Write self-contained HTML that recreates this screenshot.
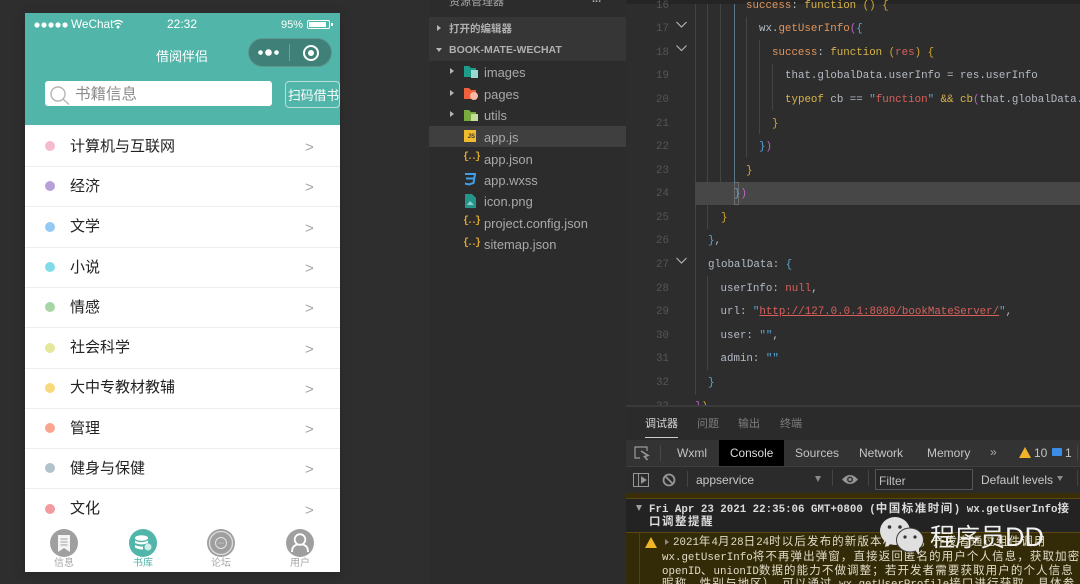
<!DOCTYPE html>
<html><head><meta charset="utf-8">
<style>
html,body{margin:0;padding:0;background:#2e2e2e}
#r{position:relative;width:1080px;height:584px;overflow:hidden;background:#2e2e2e;font-family:"Liberation Sans","Noto Sans CJK SC",sans-serif}
.a{position:absolute}
.t{position:absolute;white-space:nowrap}
.row{position:absolute;left:25px;width:315px;height:40px;border-bottom:1px solid #eee;box-sizing:content-box}
.row i{position:absolute;left:20px;top:15px;width:10px;height:10px;border-radius:50%}
.row b{position:absolute;left:45px;top:9.500px;font-weight:400;font-size:15px;line-height:22px;color:#222;white-space:nowrap}
.row u{position:absolute;left:280px;top:12px;text-decoration:none;font-size:15px;line-height:20px;color:#a6a6a6}
.f{position:absolute;left:484px;font-size:12.900px;line-height:18px;color:#a9a9a9;white-space:nowrap}
.ar{position:absolute;width:0;height:0;border-left:4px solid #b5b5b5;border-top:3.500px solid transparent;border-bottom:3.500px solid transparent}
.j{position:absolute;left:463px;font-size:10px;font-weight:700;color:#e0a92e;line-height:16px;letter-spacing:-2px;font-family:"Liberation Mono",monospace}
.n{position:absolute;left:640px;width:29px;text-align:right;font:10.800px/16px "Liberation Mono",monospace;color:#555}
.c{position:absolute;font:10.800px/16px "Liberation Mono",monospace;color:#b4bcc6;white-space:pre}
.g{position:absolute;width:1px;background:#444}
.y{color:#d4a72c}.r{color:#d8605c}.b{color:#56a6d8}.o{color:#d39a50}.p{color:#b866c8}.e{color:#e0955c}.l{color:#d9b44a}
.tab{position:absolute;top:557px;font-size:10px;line-height:14px;color:#a8a8a8;white-space:nowrap}
.dv{position:absolute;font-size:12px;line-height:16px;color:#c4c4c4;white-space:nowrap}
.m{position:absolute;left:662px;font:700 10.800px/15px "Liberation Mono","Noto Sans CJK SC",monospace;color:#dcdcdc;white-space:nowrap}
.m s{text-decoration:none;font-size:11.500px;letter-spacing:1.500px}
.m.w{font-weight:400;color:#e0dcc8}
.m.w s{letter-spacing:1.100px}
</style></head><body><div id="r">

<!-- phone -->
<div class="a" style="left:25px;top:13px;width:315px;height:559px;background:#fff;box-shadow:0 2px 8px #262626"></div>
<div class="a" style="left:25px;top:13px;width:315px;height:112px;background:#52b5a9"></div>
<svg class="a" style="left:34px;top:20px" width="36" height="10"><g fill="#fff"><circle cx="3" cy="5" r="2.600"/><circle cx="10" cy="5" r="2.600"/><circle cx="17" cy="5" r="2.600"/><circle cx="24" cy="5" r="2.600"/><circle cx="31" cy="5" r="2.600"/></g></svg>
<div class="t" style="left:71px;top:16px;font-size:11.800px;line-height:16px;color:#fff">WeChat</div>
<svg class="a" style="left:112px;top:19px" width="12" height="10" fill="none" stroke="#fff" stroke-width="1.100"><path d="M1 3.500Q6 -.5 11 3.500M3 5.500Q6 3 9 5.500"/><circle cx="6" cy="8" r=".9" fill="#fff"/></svg>
<div class="t" style="left:167px;top:16px;font-size:12px;line-height:16px;color:#fff">22:32</div>
<div class="t" style="left:281px;top:17px;font-size:11px;line-height:16px;color:#fff">95%</div>
<div class="a" style="left:307px;top:20px;width:21px;height:7px;border:1px solid #fff;border-radius:2px;box-sizing:content-box"></div>
<div class="a" style="left:309px;top:22px;width:17px;height:5px;background:#fff;box-sizing:content-box"></div>
<div class="a" style="left:331px;top:23px;width:1.500px;height:3px;background:#fff"></div>
<div class="t" style="left:156px;top:47px;font-size:13px;line-height:19px;color:#fff">借阅伴侣</div>
<div class="a" style="left:248px;top:38px;width:84px;height:29px;border-radius:15px;background:#3f8178;border:.5px solid #5d978f;box-sizing:border-box"></div>
<svg class="a" style="left:256px;top:44px" width="70" height="20"><g fill="#fff"><circle cx="4.500" cy="8.500" r="2.300"/><circle cx="12.500" cy="8.500" r="3.300"/><circle cx="20.500" cy="8.500" r="2.300"/></g><path d="M33.500 0V17" stroke="#6fa199"/><circle cx="55" cy="9" r="7" fill="none" stroke="#fff" stroke-width="2"/><circle cx="55" cy="9" r="3" fill="#fff"/></svg>
<div class="a" style="left:45px;top:81px;width:227px;height:25px;background:#fff;border-radius:3px"></div>
<svg class="a" style="left:49px;top:85px" width="22" height="21" fill="none" stroke="#b5b5b5" stroke-width="1.400"><circle cx="9" cy="9" r="7"/><path d="M14 14L20 19.500"/></svg>
<div class="t" style="left:75px;top:84px;font-size:15.500px;line-height:21px;color:#8c8c8c">书籍信息</div>
<div class="a" style="left:285px;top:81px;width:55px;height:27px;border:1px solid #b8e0da;border-radius:4px;box-sizing:border-box"></div>
<div class="t" style="left:288px;top:86px;font-size:12.800px;line-height:19px;color:#fff">扫码借书</div>

<div class="row" style="top:126px"><i style="background:#f6b9cd"></i><b>计算机与互联网</b><u>&gt;</u></div>
<div class="row" style="top:166px"><i style="background:#b79fdc"></i><b>经济</b><u>&gt;</u></div>
<div class="row" style="top:206.500px"><i style="background:#93c9f3"></i><b>文学</b><u>&gt;</u></div>
<div class="row" style="top:247px"><i style="background:#7fdce8"></i><b>小说</b><u>&gt;</u></div>
<div class="row" style="top:287px"><i style="background:#a6d5a6"></i><b>情感</b><u>&gt;</u></div>
<div class="row" style="top:327.500px"><i style="background:#e4e89a"></i><b>社会科学</b><u>&gt;</u></div>
<div class="row" style="top:367.500px"><i style="background:#fad97c"></i><b>大中专教材教辅</b><u>&gt;</u></div>
<div class="row" style="top:408px"><i style="background:#fba48e"></i><b>管理</b><u>&gt;</u></div>
<div class="row" style="top:448px"><i style="background:#b0c2cc"></i><b>健身与保健</b><u>&gt;</u></div>
<div class="row" style="top:488.500px;border:0"><i style="background:#f29a9e"></i><b>文化</b><u>&gt;</u></div>
<div class="a" style="left:25px;top:528px;width:315px;height:44px;background:#fff"></div>

<svg class="a" style="left:50px;top:529px" width="28" height="28"><circle cx="14" cy="14" r="14" fill="#9f9f9f"/><path d="M8 6H20V23L14 19L8 23Z" fill="#f4f4f4"/><path d="M10.500 10H17.500M10.500 13H17.500M10.500 16H17.500" stroke="#9f9f9f"/></svg>
<div class="tab" style="left:54px">信息</div>
<svg class="a" style="left:129px;top:529px" width="28" height="28"><circle cx="14" cy="14" r="14" fill="#52b5a9"/><ellipse cx="12.500" cy="9" rx="6.500" ry="2.800" fill="#fff"/><path d="M6 11.500Q12 15 19 11.500V14Q12 17 6 14ZM6 16Q10 18 14 17.500V20.500Q9 20.500 6 18.500Z" fill="#fff"/><circle cx="19" cy="18" r="3.500" fill="#cfeeea"/></svg>
<div class="tab" style="left:133px;color:#52b5a9">书库</div>
<svg class="a" style="left:207px;top:529px" width="28" height="28"><circle cx="14" cy="14" r="14" fill="#9f9f9f"/><circle cx="14" cy="14" r="11.500" fill="none" stroke="#ddd" stroke-width="1.300"/><circle cx="14" cy="14" r="5.500" fill="none" stroke="#e4e4e4"/><path d="M11.500 14H16.500" stroke="#ddd" stroke-dasharray="1 1"/></svg>
<div class="tab" style="left:211px">论坛</div>
<svg class="a" style="left:286px;top:529px" width="28" height="28"><circle cx="14" cy="14" r="14" fill="#9f9f9f"/><circle cx="14" cy="10.500" r="5.300" fill="none" stroke="#fff" stroke-width="1.800"/><path d="M6 23Q6 16.500 11.500 15.500M22 23Q22 16.500 16.500 15.500" fill="none" stroke="#fff" stroke-width="1.800"/></svg>
<div class="tab" style="left:290px">用户</div>

<!-- explorer -->
<div class="a" style="left:429px;top:0;width:197px;height:584px;background:#2c2c2c"></div>
<div class="t" style="left:449px;top:-6px;font-size:11px;line-height:16px;color:#a5a5a5">资源管理器</div>
<div class="t" style="left:592px;top:-8px;font-size:11px;line-height:14px;color:#aaa;font-weight:700">...</div>
<div class="a" style="left:429px;top:17px;width:197px;height:44px;background:#363636"></div>
<div class="ar" style="left:437px;top:25px"></div>
<div class="t" style="left:449px;top:21px;font-size:10.500px;line-height:16px;color:#b0b0b0;font-weight:700">打开的编辑器</div>
<div class="a" style="left:436px;top:48px;width:0;height:0;border-top:4px solid #b5b5b5;border-left:3.500px solid transparent;border-right:3.500px solid transparent"></div>
<div class="t" style="left:449px;top:42px;font-size:10.500px;line-height:16px;color:#b0b0b0;font-weight:700">BOOK-MATE-WECHAT</div>
<div class="ar" style="left:450px;top:68px"></div><div class="ar" style="left:450px;top:90px"></div><div class="ar" style="left:450px;top:111px"></div>
<svg class="a" style="left:463px;top:65px" width="16" height="14"><path d="M1 1H6L8 3H13V12H1Z" fill="#1c9c89"/><rect x="8" y="5" width="7" height="8" fill="#9bd8cf"/></svg>
<svg class="a" style="left:463px;top:87px" width="16" height="14"><path d="M1 1H6L8 3H13V12H1Z" fill="#f0603c"/><circle cx="11" cy="9" r="4" fill="#f9b7a6"/></svg>
<svg class="a" style="left:463px;top:109px" width="16" height="14"><path d="M1 1H6L8 3H13V12H1Z" fill="#79ab3c"/><rect x="8" y="5" width="7" height="7" fill="#c4dc9c"/></svg>
<div class="a" style="left:429px;top:126px;width:197px;height:21px;background:#3f3f3f"></div>
<div class="a" style="left:464px;top:130px;width:12px;height:12px;background:#f0bc2e;color:#333;font:700 6px/15px 'Liberation Sans',sans-serif;text-align:right;box-sizing:border-box;padding-right:1px">JS</div>
<div class="f" style="top:64px">images</div><div class="f" style="top:86px">pages</div><div class="f" style="top:107px">utils</div>
<div class="f" style="top:129px">app.js</div><div class="f" style="top:151px">app.json</div><div class="f" style="top:172px">app.wxss</div><div class="f" style="top:193px">icon.png</div><div class="f" style="top:215px">project.config.json</div><div class="f" style="top:236px">sitemap.json</div>
<div class="j" style="top:150px">{..}</div><div class="j" style="top:214px">{..}</div><div class="j" style="top:236px">{..}</div>
<svg class="a" style="left:463px;top:172px" width="14" height="14" fill="none" stroke="#3f9fe8" stroke-width="2"><path d="M2 2H12L10.500 11L6 12.500L2 11.500M3 6.500H11"/></svg>
<svg class="a" style="left:465px;top:194px" width="11" height="14"><path d="M0 0H7L11 4V14H0Z" fill="#25958a"/><path d="M2 11L5 7L9 11Z" fill="#8cd0c8"/></svg>

<!-- editor -->
<div class="a" style="left:626px;top:0;width:454px;height:405px;background:#2d2d2d"></div>
<div class="a" style="left:695px;top:182px;width:385px;height:23px;background:#474747"></div>
<div class="a" style="left:734px;top:182px;width:5px;height:23px;border:1px solid #6b6b6b;box-sizing:border-box"></div>
<div class="g" style="left:695px;top:4px;height:178px"></div><div class="g" style="left:695px;top:205px;height:190px"></div>
<div class="g" style="left:707px;top:4px;height:178px"></div><div class="g" style="left:707px;top:205px;height:24px"></div>
<div class="g" style="left:720px;top:4px;height:178px"></div>
<div class="g" style="left:734px;top:4px;height:180px;background:#5d7685"></div>
<div class="g" style="left:746px;top:17px;height:140px"></div>
<div class="g" style="left:759px;top:40px;height:94px"></div>
<div class="g" style="left:772px;top:64px;height:46px"></div>
<div class="g" style="left:707px;top:276px;height:94px"></div>
<div class="a" style="left:626px;top:0;width:454px;height:4px;background:#252525"></div>

<div class="n" style="top:-2px">16</div>
<div class="n" style="top:21px">17</div><div class="n" style="top:45px">18</div><div class="n" style="top:68px">19</div><div class="n" style="top:92px">20</div><div class="n" style="top:116px">21</div><div class="n" style="top:139px">22</div><div class="n" style="top:163px">23</div><div class="n" style="top:186px">24</div><div class="n" style="top:210px">25</div><div class="n" style="top:233px">26</div><div class="n" style="top:257px">27</div><div class="n" style="top:281px">28</div><div class="n" style="top:304px">29</div><div class="n" style="top:328px">30</div><div class="n" style="top:351px">31</div><div class="n" style="top:375px">32</div><div class="n" style="top:399px">33</div>
<svg class="a" style="left:675px;top:20px" width="14" height="34" fill="none" stroke="#b0b0b0" stroke-width="1.200"><path d="M1.500 2L6.500 7L11.500 2M1.500 25.500L6.500 30.500L11.500 25.500"/></svg>
<svg class="a" style="left:675px;top:256px" width="14" height="12" fill="none" stroke="#b0b0b0" stroke-width="1.200"><path d="M1.500 2L6.500 7L11.500 2"/></svg>

<div class="c" style="left:746px;top:-2px"><span class="e">success</span>: <span class="l">function</span> <span class="y">()</span> <span class="y">{</span></div>
<div class="c" style="left:759px;top:21px">wx.<span class="e">getUserInfo</span><span class="p">(</span><span class="b">{</span></div>
<div class="c" style="left:772px;top:45px"><span class="e">success</span>: <span class="l">function</span> <span class="y">(</span><span class="r">res</span><span class="y">)</span> <span class="y">{</span></div>
<div class="c" style="left:785px;top:68px">that.globalData.userInfo = res.userInfo</div>
<div class="c" style="left:785px;top:92px"><span class="l">typeof</span> cb == <span class="b">"</span><span class="r">function</span><span class="b">"</span> <span class="l">&amp;&amp;</span> <span class="l">cb</span><span class="p">(</span>that.globalData.</div>
<div class="c" style="left:772px;top:116px"><span class="y">}</span></div>
<div class="c" style="left:759px;top:139px"><span class="b">}</span><span class="p">)</span></div>
<div class="c" style="left:746px;top:163px"><span class="y">}</span></div>
<div class="c" style="left:734px;top:186px"><span class="b">}</span><span class="p">)</span></div>
<div class="c" style="left:721px;top:210px"><span class="y">}</span></div>
<div class="c" style="left:708px;top:233px"><span class="b">}</span>,</div>
<div class="c" style="left:708px;top:257px">globalData: <span class="b">{</span></div>
<div class="c" style="left:720.500px;top:281px">userInfo: <span class="r">null</span>,</div>
<div class="c" style="left:720.500px;top:304px">url: <span class="b">"</span><span class="r" style="text-decoration:underline">http://127.0.0.1:8080/bookMateServer/</span><span class="b">"</span>,</div>
<div class="c" style="left:720.500px;top:328px">user: <span class="b">""</span>,</div>
<div class="c" style="left:720.500px;top:351px">admin: <span class="b">""</span></div>
<div class="c" style="left:708px;top:375px"><span class="b">}</span></div>
<div class="c" style="left:695px;top:399px"><span class="p">}</span><span class="y">)</span></div>

<!-- devtools -->
<div class="a" style="left:626px;top:405px;width:454px;height:179px;background:#2b2b2b;border-top:2px solid #3a3a3a;box-sizing:border-box"></div>
<div class="dv" style="left:645px;top:416px;font-size:11px;color:#d8d8d8">调试器</div>
<div class="dv" style="left:697px;top:416px;font-size:11px;color:#7e7e7e">问题</div>
<div class="dv" style="left:738px;top:416px;font-size:11px;color:#7e7e7e">输出</div>
<div class="dv" style="left:780px;top:416px;font-size:11px;color:#7e7e7e">终端</div>
<div class="a" style="left:645px;top:437px;width:33px;height:1px;background:#ccc"></div>
<div class="a" style="left:626px;top:440px;width:454px;height:26px;background:#333"></div>
<div class="a" style="left:719px;top:440px;width:65px;height:26px;background:#000"></div>
<svg class="a" style="left:634px;top:446px" width="18" height="15" fill="none" stroke="#9a9a9a" stroke-width="1.200"><path d="M6 12H1V1H13V5"/><path d="M7 5L14 9.500L10.500 10.500L13.500 14" stroke-width="1.600"/></svg>
<div class="a" style="left:660px;top:445px;width:1px;height:16px;background:#484848"></div>
<div class="a" style="left:1077px;top:445px;width:1px;height:16px;background:#484848"></div>
<div class="dv" style="left:677px;top:445px">Wxml</div><div class="dv" style="left:730px;top:445px;color:#ddd;font-size:11.800px">Console</div><div class="dv" style="left:795px;top:445px">Sources</div><div class="dv" style="left:859px;top:445px">Network</div><div class="dv" style="left:927px;top:445px">Memory</div>
<div class="dv" style="left:990px;top:444px;color:#aaa">»</div>
<svg class="a" style="left:1019px;top:447px" width="12" height="11"><path d="M6 0L12 11H0Z" fill="#f0b429"/></svg>
<div class="dv" style="left:1034px;top:445px">10</div>
<div class="a" style="left:1052px;top:448px;width:10px;height:8px;background:#3a8ee8;border-radius:1px"></div>
<div class="dv" style="left:1065px;top:445px">1</div>
<div class="a" style="left:626px;top:466px;width:454px;height:1px;background:#3e3e3e"></div>
<svg class="a" style="left:633px;top:473px" width="16" height="14" fill="none" stroke="#969696"><rect x=".5" y=".5" width="15" height="13"/><path d="M5.500 1V13"/><path d="M8.500 4L13 7L8.500 10Z" fill="#969696"/></svg>
<svg class="a" style="left:662px;top:473px" width="14" height="14" fill="none" stroke="#969696" stroke-width="1.800"><circle cx="7" cy="7" r="5.500"/><path d="M3 3L11 11"/></svg>
<div class="a" style="left:687px;top:471px;width:1px;height:16px;background:#444"></div>
<div class="dv" style="left:696px;top:472px;color:#c8c8c8">appservice</div>
<div class="a" style="left:815px;top:476px;width:0;height:0;border-top:6px solid #8a8a8a;border-left:3.500px solid transparent;border-right:3.500px solid transparent"></div>
<svg class="a" style="left:842px;top:474px" width="16" height="11"><path d="M0 5.500Q8 -3.500 16 5.500Q8 14.500 0 5.500Z" fill="#969696"/><circle cx="8" cy="5.500" r="3" fill="#333"/><circle cx="8" cy="5.500" r="1.500" fill="#969696"/></svg>
<div class="a" style="left:832px;top:470px;width:1px;height:16px;background:#444"></div>
<div class="a" style="left:868px;top:470px;width:1px;height:16px;background:#444"></div>
<div class="a" style="left:1077px;top:470px;width:1px;height:16px;background:#444"></div>
<div class="a" style="left:875px;top:469px;width:98px;height:21px;border:1px solid #555;background:#272727;box-sizing:border-box"></div>
<div class="dv" style="left:879px;top:473px;color:#c0c0c0">Filter</div>
<div class="dv" style="left:981px;top:472px;color:#c8c8c8">Default levels</div>
<div class="a" style="left:1057px;top:476px;width:0;height:0;border-top:5px solid #8a8a8a;border-left:3px solid transparent;border-right:3px solid transparent"></div>

<div class="a" style="left:626px;top:493px;width:454px;height:6px;background:#3a2e08"></div>
<div class="a" style="left:626px;top:498px;width:454px;height:35px;background:#232323;border-top:1px solid #5a4810;border-bottom:1px solid #5a4810;box-sizing:border-box"></div>
<div class="a" style="left:626px;top:533px;width:454px;height:51px;background:#332a07"></div>
<div class="a" style="left:639px;top:533px;width:1px;height:51px;background:#4a4226"></div>
<div class="a" style="left:636px;top:505px;width:0;height:0;border-top:6px solid #a0a0a0;border-left:3.500px solid transparent;border-right:3.500px solid transparent"></div>
<div class="m" style="left:649px;top:502px">Fri Apr 23 2021 22:35:06 GMT+0800 (<s>中国标准时间</s>) wx.getUserInfo<s>接</s></div>
<div class="m" style="left:649px;top:515px"><s>口调整提醒</s></div>
<svg class="a" style="left:645px;top:537px" width="12" height="11"><path d="M6 0L12 11H0Z" fill="#f0b429"/></svg>
<div class="ar" style="left:665px;top:539px;border-left-color:#888"></div>
<div class="m w" style="left:673px;top:535px">2021<s>年</s>4<s>月</s>28<s>日</s>24<s>时以后发布的新版本小程序，开发者通过组件调用</s></div>
<div class="m w" style="left:662px;top:549.500px">wx.getUserInfo<s>将不再弹出弹窗，直接返回匿名的用户个人信息，获取加密</s></div>
<div class="m w" style="left:662px;top:564px">openID<s>、</s>unionID<s>数据的能力不做调整；若开发者需要获取用户的个人信息</s></div>
<div class="m w" style="left:662px;top:577px"><s>昵称、性别与地区），可以通过</s> wx.getUserProfile<s>接口进行获取，具体参</s></div>

<!-- watermark -->
<svg class="a" style="left:878px;top:514px" width="50" height="42"><ellipse cx="17" cy="17" rx="15" ry="14" fill="#e0e0e0"/><path d="M8 27L7 33L15 29Z" fill="#e0e0e0"/><circle cx="11.500" cy="13" r="1.800" fill="#333"/><circle cx="22" cy="13" r="1.800" fill="#333"/><ellipse cx="32" cy="26" rx="13.500" ry="12" fill="#e0e0e0" stroke="#3a3a3a"/><path d="M37 36L41 41L41 33Z" fill="#e0e0e0"/><circle cx="27" cy="23" r="1.600" fill="#333"/><circle cx="37" cy="23" r="1.600" fill="#333"/></svg>
<div class="t" style="left:930px;top:519px;font-size:25px;line-height:36px;color:#f0f0f0">程序员<span style="font-size:27px">DD</span></div>
</div></body></html>
